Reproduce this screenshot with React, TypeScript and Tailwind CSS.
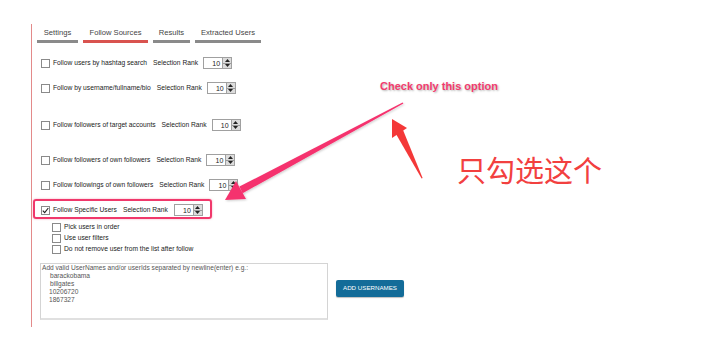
import React from "react";

const Check = ({ checked = false }: { checked?: boolean }) => (
  <div className="w-[9px] h-[9px] border border-[#8a8a8a] bg-white flex items-center justify-center shrink-0">
    {checked && (
      <svg width="7" height="7" viewBox="0 0 7 7">
        <path d="M0.8 3.6 L2.7 5.6 L6.3 1" fill="none" stroke="#222" strokeWidth="1.1" />
      </svg>
    )}
  </div>
);

const Spin = () => (
  <div className="flex h-[12px] w-[29px] border border-[#a0a0a0] bg-white shrink-0">
    <div className="flex-1 flex items-center justify-end pr-[2px] text-[7px] leading-none text-[#222]">10</div>
    <div className="w-[9px] flex flex-col bg-[#dcdcdc] border-l border-[#a0a0a0]">
      <div className="flex-1 flex items-center justify-center border-b border-[#9a9a9a]">
        <svg width="5" height="3" viewBox="0 0 5 3">
          <path d="M0 3 L2.5 0 L5 3 Z" fill="#222" />
        </svg>
      </div>
      <div className="flex-1 flex items-center justify-center">
        <svg width="5" height="3" viewBox="0 0 5 3">
          <path d="M0 0 L2.5 3 L5 0 Z" fill="#222" />
        </svg>
      </div>
    </div>
  </div>
);

const Row = ({ label, cls, checked = false }: { label: string; cls: string; checked?: boolean }) => (
  <div className={`flex items-center h-[12px] ${cls}`}>
    <Check checked={checked} />
    <span className="ml-[3px] text-[6.7px] leading-none text-[#222] whitespace-nowrap">{label}</span>
    <span className="ml-[6px] text-[6.7px] leading-none text-[#222] whitespace-nowrap">Selection Rank</span>
    <div className="ml-[5px]">
      <Spin />
    </div>
  </div>
);

const Sub = ({ label }: { label: string }) => (
  <div className="flex items-center h-[11px] ml-[11px]">
    <Check />
    <span className="ml-[3px] text-[6.7px] leading-none text-[#222] whitespace-nowrap">{label}</span>
  </div>
);

const tabs = [
  { t: "Settings", w: "w-[41px]", active: false },
  { t: "Follow Sources", w: "w-[65px]", active: true },
  { t: "Results", w: "w-[37px]", active: false },
  { t: "Extracted Users", w: "w-[66px]", active: false },
];

export default function App() {
  return (
    <div
      className="relative w-[701px] h-[343px] bg-white overflow-hidden"
      style={{ fontFamily: '"Liberation Sans", Arial, sans-serif' }}
    >
      <div className="ml-[31px] mt-[24px] h-[303px] border-l border-[#e38a8a] pl-[5px]">
        <div className="flex gap-[5px]">
          {tabs.map((tb) => (
            <div
              key={tb.t}
              className={`${tb.w} h-[19px] flex items-end justify-center pb-[2px] border-b-[3px] ${
                tb.active ? "border-[#d9534f]" : "border-[#8a8a8a]"
              }`}
            >
              <span className="text-[7.6px] leading-[10px] text-[#444] whitespace-nowrap">{tb.t}</span>
            </div>
          ))}
        </div>

        <div className="pl-[4px]">
          <Row label="Follow users by hashtag search" cls="mt-[14px]" />
          <Row label="Follow by username/fullname/bio" cls="mt-[13px]" />
          <Row label="Follow followers of target accounts" cls="mt-[25px]" />
          <Row label="Follow followers of own followers" cls="mt-[23px]" />
          <Row label="Follow followings of own followers" cls="mt-[13px]" />

          <div className="mt-[8px] -ml-[8px] w-[179px] h-[20px] border-2 border-[#f0386b] rounded-[3px] shadow-[0_0_2px_rgba(240,56,107,0.5)] pl-[6px] pt-[2px] flex items-center">
            <Check checked />
            <span className="ml-[3px] text-[6.7px] leading-none text-[#222] whitespace-nowrap">Follow Specific Users</span>
            <span className="ml-[6px] text-[6.7px] leading-none text-[#222] whitespace-nowrap">Selection Rank</span>
            <div className="ml-[6px]">
              <Spin />
            </div>
          </div>

          <div className="mt-[3px]">
            <Sub label="Pick users in order" />
            <Sub label="Use user filters" />
            <Sub label="Do not remove user from the list after follow" />
          </div>

          <div className="flex mt-[8px] -ml-[1px]">
            <div className="w-[288px] h-[57px] border border-[#d4d4d4] border-b-[2px] border-b-[#e0e0e0] pl-[1px] text-[6.6px] leading-[8px] text-[#555]">
              <div>Add valid UserNames and/or userIds separated by newline(enter) e.g.:</div>
              <div className="pl-[8px]">barackobama</div>
              <div className="pl-[8px]">billgates</div>
              <div className="pl-[7px]">10206720</div>
              <div className="pl-[7px]">1867327</div>
            </div>
            <div className="ml-[8px] mt-[17px] w-[68px] h-[17px] bg-[#136c99] rounded-[2px] shadow-[0_1px_1px_rgba(0,0,0,0.25)] flex items-center justify-center">
              <span className="text-[6.2px] leading-none text-white whitespace-nowrap">ADD USERNAMES</span>
            </div>
          </div>
        </div>
      </div>

      {/* annotations */}
      <div
        className="absolute left-[380px] top-[79px] text-[11px] leading-[14px] font-bold text-[#f23c6e] whitespace-nowrap [text-shadow:1px_1px_2px_rgba(0,0,0,0.3)]"
        style={{ fontFamily: '"Liberation Sans", Arial, sans-serif' }}
      >
        Check only this option
      </div>

      <div
        className="absolute left-[457px] top-[155px] text-[29px] leading-[29px] text-[#f2403f] whitespace-nowrap"
        style={{ fontFamily: '"Noto Sans CJK SC", sans-serif', fontWeight: 400 }}
      >
        只勾选这个
      </div>

      <svg className="absolute left-0 top-0 pointer-events-none" width="701" height="343" viewBox="0 0 701 343">
        <defs>
          <filter id="sh" x="-10%" y="-10%" width="120%" height="120%">
            <feDropShadow dx="1" dy="1" stdDeviation="1" floodColor="#000" floodOpacity="0.2" />
          </filter>
        </defs>
        <g filter="url(#sh)" fill="#f5336e">
          <polygon points="403.4,103.6 402.6,102.4 239.4,186.6 242.6,193.2" />
          <polygon points="225,200 246,199 236,181" />
        </g>
        <g fill="#f43838">
          <polygon points="396,134 403,130 422.6,178 421.6,178.5" />
          <polygon points="392,119 392,138 407,128" />
        </g>
      </svg>
    </div>
  );
}
